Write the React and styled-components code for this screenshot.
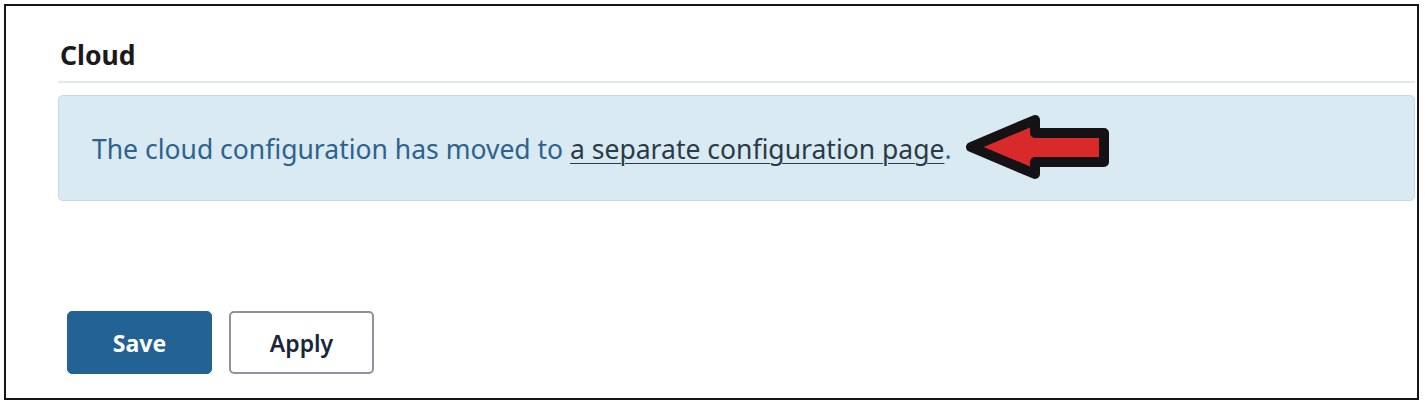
import React from 'react';
import styled, { createGlobalStyle } from 'styled-components';

const GlobalStyle = createGlobalStyle`
    html, body {
        margin: 0;
        padding: 0;
        background: #fff;
    }
    body {
        font-family: 'Noto Sans', 'Open Sans', sans-serif;
    }
`;

const Frame = styled.div`
    box-sizing: border-box;
    width: 1415px;
    height: 396px;
    margin: 4px 0 0 4px;
    border: 2px solid #15151a;
    background: #fff;
    overflow: hidden;
    padding: 0 2px 0 52px;
    display: flex;
    flex-direction: column;
`;

const SectionTitle = styled.h2`
    margin: 31px 0 0;
    padding: 0 0 8px 2px;
    font-size: 26.5px;
    font-weight: 700;
    color: #1a1a1a;
    line-height: 36px;
    border-bottom: 2px solid #e3e9e9;
`;

const InfoBox = styled.div`
    margin-top: 12px;
    height: 106px;
    box-sizing: border-box;
    display: flex;
    align-items: center;
    padding: 2px 0 0 33px;
    background: #d9eaf3;
    border: 1px solid #c2d9e6;
    border-radius: 5px;
    color: #2e6290;
    font-size: 26.5px;
`;

const Message = styled.span`
    white-space: nowrap;
`;

const Link = styled.a`
    color: #2b3a48;
    text-decoration: underline;
    text-underline-offset: 4px;
    text-decoration-thickness: 1px;
`;

const Arrow = styled.svg`
    margin: -2px 0 0 4px;
    flex: none;
`;

const ButtonRow = styled.div`
    margin-top: auto;
    margin-bottom: 24px;
    padding-left: 9px;
    display: flex;
    gap: 17px;
`;

const Button = styled.button`
    width: 145px;
    height: 63px;
    box-sizing: border-box;
    border-radius: 5px;
    font-family: 'Noto Sans', 'Open Sans', sans-serif;
    font-size: 23px;
    cursor: pointer;
    background: ${p => (p.primary ? '#236295' : '#fff')};
    color: ${p => (p.primary ? '#fff' : '#1a2638')};
    border: ${p => (p.primary ? '1px solid #236295' : '2px solid #8d939b')};
    font-weight: ${p => (p.primary ? 700 : 600)};
`;

export default function App() {
    return (
        <>
            <GlobalStyle />
            <Frame>
                <SectionTitle>Cloud</SectionTitle>
                <InfoBox>
                    <Message>
                        The cloud configuration has moved to{' '}
                        <Link href="#">a separate configuration page</Link>.
                    </Message>
                    <Arrow width="158" height="80" viewBox="0 0 158 80">
                        <polygon
                            points="15,39 79,12 79,25 148,25 148,54 79,54 79,66"
                            fill="#d8292b"
                            stroke="#141214"
                            strokeWidth="10"
                            strokeLinejoin="round"
                        />
                    </Arrow>
                </InfoBox>
                <ButtonRow>
                    <Button primary>Save</Button>
                    <Button>Apply</Button>
                </ButtonRow>
            </Frame>
        </>
    );
}
